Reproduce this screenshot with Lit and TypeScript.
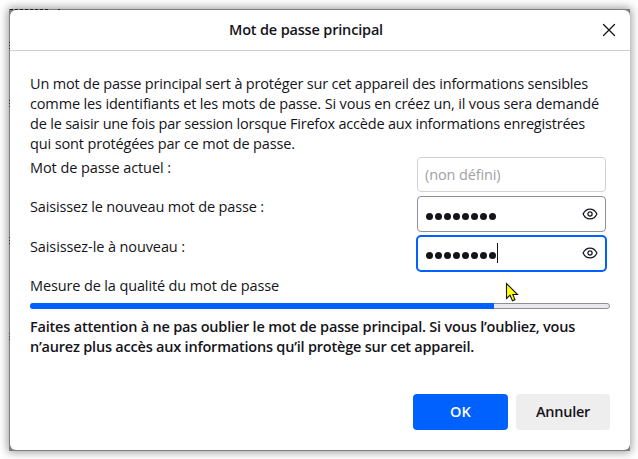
import { LitElement, html, css } from "lit";
import { customElement, property } from "lit/decorators.js";

/** A single line of text whose letter spacing is adjusted to span a given width. */
@customElement("fit-line")
class FitLine extends LitElement {
  @property({ type: Number }) width = 0;
  static styles = css`
    :host { display: block; white-space: nowrap; }
    span { display: inline-block; white-space: pre; }
  `;
  render() {
    return html`<span><slot></slot></span>`;
  }
  firstUpdated() {
    this.fit();
    document.fonts.ready.then(() => this.fit());
  }
  fit() {
    const span = this.renderRoot.querySelector("span") as HTMLElement;
    span.style.letterSpacing = "0px";
    const count = (this.textContent ?? "").length;
    const natural = span.getBoundingClientRect().width;
    if (count && natural) span.style.letterSpacing = `${(this.width - natural) / count}px`;
  }
}

@customElement("password-field")
class PasswordField extends LitElement {
  @property({ type: Number }) length = 8;
  @property({ type: Boolean, reflect: true }) active = false;
  static styles = css`
    :host {
      display: flex; align-items: center; box-sizing: border-box;
      width: 189px; height: 36px; padding: 0 7px; margin-left: 1px;
      border: 1px solid #8f8f9d; border-radius: 4px; background: #fff;
    }
    :host([active]) {
      width: 191px; height: 37px; margin-left: 0; border: 2px solid #0061ff; border-radius: 5px;
    }
    .dots { display: flex; gap: 2px; padding: 4px 0 0 1px; }
    :host([active]) .dots { padding-top: 3px; }
    .dot { width: 7px; height: 7px; border-radius: 50%; background: #15141a; }
    .caret { width: 1px; height: 20px; background: #15141a; margin: -1px 0 0 1px; }
    .eye { margin-left: auto; margin-top: -1px; }
    svg { display: block; }
  `;
  render() {
    return html`
      <div class="dots">${Array.from({ length: this.length }, () => html`<i class="dot"></i>`)}</div>
      ${this.active ? html`<i class="caret"></i>` : ""}
      <svg class="eye" width="16" height="14" viewBox="0 0 16 14" fill="none" stroke="#15141a" stroke-width="1.25">
        <path d="M1.1 7C2.6 3.8 5 2.1 8 2.1S13.4 3.8 14.9 7C13.4 10.2 11 11.9 8 11.9S2.6 10.2 1.1 7Z" />
        <circle cx="8" cy="7" r="2.1" />
      </svg>`;
  }
}

@customElement("app-root")
class AppRoot extends LitElement {
  static styles = css`
    :host {
      display: block; box-sizing: border-box; width: 638px; height: 459px; padding: 9px 8px 8px 9px;
      overflow: hidden; background: #fff; color: #15141a;
      font: 14.5px/20px "Open Sans", "Noto Sans", sans-serif;
    }
    .frame {
      box-sizing: border-box; width: 621px; height: 442px; padding: 1px 0 1px 1px;
      background:
        repeating-linear-gradient(90deg, #222 0 3px, #7f7f7f 3px 5px) 1px 0 / 38px 1px no-repeat,
        linear-gradient(#222, #222) 49px 0 / 2px 1px no-repeat,
        repeating-linear-gradient(#333 0 1px, #7f7f7f 1px 3px) 0 33px / 1px 8px no-repeat,
        repeating-linear-gradient(#333 0 1px, #7f7f7f 1px 3px) 0 91px / 1px 8px no-repeat,
        repeating-linear-gradient(#333 0 1px, #7f7f7f 1px 3px) 0 228px / 1px 8px no-repeat,
        repeating-linear-gradient(#34466f 0 1px, #7f7f7f 1px 3px) 0 324px / 1px 9px no-repeat,
        #7f7f7f;
      box-shadow: 0 0 9px 1px rgba(0, 0, 0, 0.42);
    }
    .dialog {
      display: flex; flex-direction: column; width: 620px; height: 440px;
      border-radius: 6px; background: #fff; overflow: hidden;
    }
    header {
      display: grid; grid-template-columns: 219px 1fr 28px; align-items: center;
      box-sizing: border-box; height: 41px; border-bottom: 1px solid #cfcfd1; font-weight: 600;
    }
    .title { grid-column: 2; }
    .close { display: block; }
    main { display: flex; flex-direction: column; padding: 23px 20px 0; }
    .fields { display: grid; grid-template-columns: 386px 192px; grid-template-rows: 39px 39px 38px; }
    .label { margin-top: 4px; }
    .label.third { margin-top: 5px; }
    .current {
      box-sizing: border-box; width: 189px; height: 35px; margin: 3px 0 0 1px; padding: 7px;
      border: 1px solid #d2d2d6; border-radius: 4px; color: #a1a1a3; line-height: 20px;
    }
    .second { margin-top: 3px; }
    .third-field { margin-top: 3px; }
    .quality { margin-top: 6px; }
    .meter {
      box-sizing: border-box; width: 580px; height: 6px; margin-top: 7px; border: 1px solid #8f8f9d;
      border-radius: 3px; background: #e9e9ed;
    }
    .value { height: 6px; margin: -1px 0 0 -1px; background: #0061ff; border-radius: 3px 0 0 3px; }
    .warning { margin-top: 8px; font-weight: 600; }
    .actions { display: flex; justify-content: flex-end; gap: 8px; margin: auto 20px 20px 0; }
    .button {
      display: flex; align-items: center; justify-content: center; width: 94px; height: 36px;
      border-radius: 4px; background: #eeeeee; font-weight: 600;
    }
    .button.primary { width: 95px; background: #0061ff; color: #fff; }
    .pointer { position: absolute; left: 505px; top: 282px; }
  `;
  render() {
    return html`
      <div class="frame">
        <div class="dialog">
          <header>
            <fit-line class="title" width="154">Mot de passe principal</fit-line>
            <svg class="close" width="14" height="14" viewBox="0 0 14 14" fill="none" stroke="#15141a" stroke-width="1.3" stroke-linecap="round">
              <path d="M1.5 1.5 12.5 12.5M12.5 1.5 1.5 12.5" />
            </svg>
          </header>
          <main>
            <fit-line width="558">Un mot de passe principal sert à protéger sur cet appareil des informations sensibles</fit-line>
            <fit-line width="569">comme les identifiants et les mots de passe. Si vous en créez un, il vous sera demandé</fit-line>
            <fit-line width="555">de le saisir une fois par session lorsque Firefox accède aux informations enregistrées</fit-line>
            <fit-line width="265">qui sont protégées par ce mot de passe.</fit-line>
            <div class="fields">
              <fit-line class="label" width="141">Mot de passe actuel :</fit-line>
              <div class="current"><fit-line width="75.5">(non défini)</fit-line></div>
              <fit-line class="label" width="234">Saisissez le nouveau mot de passe :</fit-line>
              <password-field class="second"></password-field>
              <fit-line class="label third" width="155">Saisissez-le à nouveau :</fit-line>
              <password-field class="third-field" active></password-field>
            </div>
            <fit-line class="quality" width="249">Mesure de la qualité du mot de passe</fit-line>
            <div class="meter"><div class="value" style="width:464px"></div></div>
            <div class="warning">
              <fit-line width="545">Faites attention à ne pas oublier le mot de passe principal. Si vous l’oubliez, vous</fit-line>
              <fit-line width="444">n’aurez plus accès aux informations qu’il protège sur cet appareil.</fit-line>
            </div>
          </main>
          <div class="actions">
            <div class="button primary"><fit-line width="21">OK</fit-line></div>
            <div class="button"><fit-line width="54">Annuler</fit-line></div>
          </div>
        </div>
      </div>
      <svg class="pointer" width="15" height="21" viewBox="0 0 15 21">
        <path d="M1.5 1.5V16.5L5 13.2 7.5 18.7 10 17.6 7.8 12.5H12.5Z" fill="#ffff00" stroke="#15141a" stroke-width="1.1" />
      </svg>`;
  }
}
